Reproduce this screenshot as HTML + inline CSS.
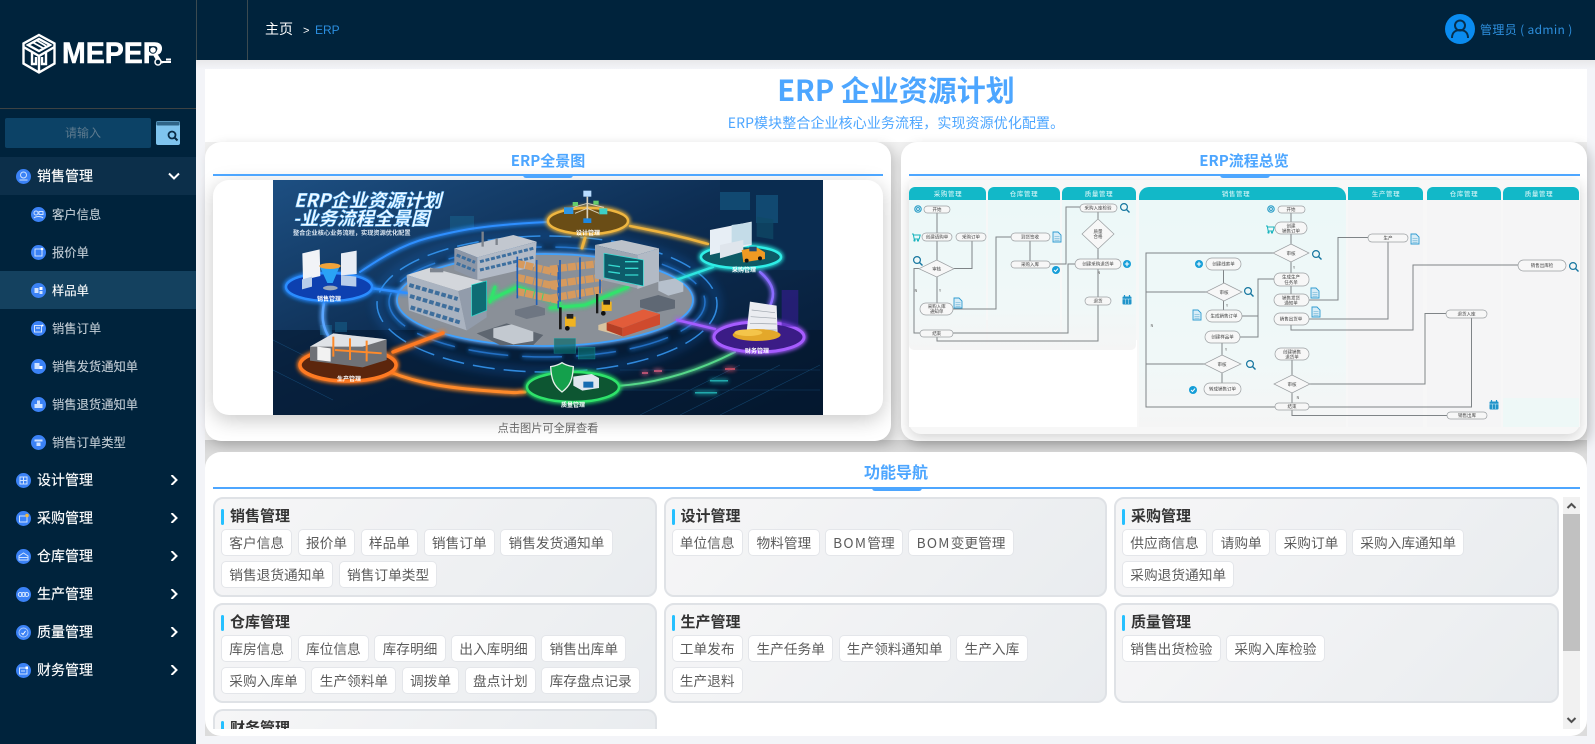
<!DOCTYPE html>
<html lang="zh-CN"><head><meta charset="utf-8"><title>ERP</title>
<style>
*{box-sizing:border-box;margin:0;padding:0}
html,body{width:1595px;height:744px;overflow:hidden;background:#f3f4f8;font-family:"Liberation Sans","Noto Sans CJK SC",sans-serif}
.abs{position:absolute}
#side{position:absolute;left:0;top:0;width:196px;height:744px;background:#00233c}
#head{position:absolute;left:196px;top:0;width:1399px;height:60px;background:#00233c}
.m{position:absolute;left:0;width:196px;height:38px;line-height:38px;font-size:14px;color:#fff;padding-left:37px;font-family:"Noto Sans CJK SC",sans-serif;-webkit-text-stroke:.15px #fff}
.s{padding-left:52px;font-size:12.3px;color:#c3ced6;-webkit-text-stroke:.1px #c3ced6}
.m>svg.i{position:absolute;left:16px;top:11.5px;width:15px;height:15px}
.s>svg.i{left:31px}
.m>svg.c{position:absolute;left:168px;top:14px;width:12px;height:10px}
.cjk{font-family:"Noto Sans CJK SC",sans-serif}
.card{position:absolute;border-radius:16px;box-shadow:4px 4px 12px rgba(0,0,0,.2);background:#fff}
.line{position:absolute;height:2px;background:#4da6ff}
.bar{position:absolute;width:50px;height:3px;background:#4da6ff;border-radius:0 0 3px 3px}
.ttl{position:absolute;font:bold 15px/20px "Noto Sans CJK SC",sans-serif;color:#4da6ff;text-align:center}
.g{position:relative;height:100px;border:2px solid #dfe2e6;border-radius:10px;background:linear-gradient(135deg,#f6f6f7,#e9ecef)}
.g h4{position:absolute;left:15px;top:6px;font:bold 15px/22px "Noto Sans CJK SC",sans-serif;color:#333}
.g h4:before{content:"";position:absolute;left:-9px;top:4px;width:3px;height:16px;background:#25c0ff;border-radius:2px}
.tags{position:absolute;left:6px;right:4px;top:30px;display:flex;flex-wrap:wrap;column-gap:5.3px;row-gap:5px}
.tags span{display:block;height:27px;line-height:25px;padding:0 7.3px;font-size:13.7px;color:#5c5c5c;background:#fff;border:1px solid #e4e6ea;border-radius:5px;font-family:"Noto Sans CJK SC",sans-serif;white-space:nowrap}
.tags i{font-style:normal;letter-spacing:1.3px}
svg text{font-family:"Noto Sans CJK SC",sans-serif}
</style></head><body>

<div id="head"></div>
<div class="abs" style="left:196px;top:0;width:1px;height:60px;background:#3b4a50"></div>
<div class="abs" style="left:247px;top:0;width:1px;height:60px;background:#3b4a50"></div>
<div class="abs cjk" style="left:265px;top:19px;font-size:14px;line-height:21px;color:#fff">主页</div>
<div class="abs" style="left:303px;top:21px;font-size:11px;line-height:20px;color:#fff">&gt;</div>
<div class="abs" style="left:315px;top:20px;font-size:12px;line-height:20px;color:#2b8fe0">ERP</div>
<svg class="abs" style="left:1445px;top:14px" width="30" height="30" viewBox="0 0 30 30"><circle cx="15" cy="15" r="15" fill="#0a8cf0"/><circle cx="15" cy="11.5" r="5" fill="none" stroke="#06304f" stroke-width="2"/><path d="M7 24c0-6 4-8 8-8s8 2 8 8" fill="none" stroke="#06304f" stroke-width="2"/></svg>
<div class="abs cjk" style="left:1480px;top:21px;font-size:12px;line-height:18px;color:#2d8fdd;letter-spacing:.35px;white-space:nowrap">管理员 ( admin )</div>

<div id="side">
<svg class="abs" style="left:20px;top:33px" width="38" height="42" viewBox="0 0 38 42" fill="none" stroke="#fff" stroke-width="2.4"><path d="M19 2l15.500 8.500v20L19 39.500 3.500 30.500v-20z"/><path d="M8 12l11-6 11 6-11 6z"/><path d="M3.500 14L19 23l15.500-9M12 19v12h4v-7M19 23v16M26 19v12h-4v-7"/><path d="M12 9l11 6M16 7l10 6" stroke-width="1.800"/></svg>
<div class="abs" style="left:62px;top:37px;font:bold 30px/34px 'Liberation Sans',sans-serif;color:#fff;-webkit-text-stroke:.5px #fff;transform-origin:left;transform:scaleX(.95)">MEPER</div>
<svg class="abs" style="left:146px;top:45px" width="26" height="24" viewBox="0 0 26 24" fill="none"><circle cx="7" cy="5" r="3.300" fill="#fff" stroke="#00233c"/><circle cx="12" cy="17" r="3" fill="#00233c" stroke="#fff" stroke-width="1.500"/><path d="M15 17h10M20 14.500h5" stroke="#fff" stroke-width="2"/></svg>
<div class="abs" style="left:0;top:108px;width:196px;height:1px;background:#3d4243"></div>
<div class="abs cjk" style="left:5px;top:118px;width:146px;height:30px;padding-left:10px;border-radius:2px;background:#0c4266;color:#5d7a8e;font-size:12px;line-height:30px;text-align:center">请输入</div>
<svg class="abs" style="left:156px;top:121px" width="24" height="24" viewBox="0 0 24 24"><rect width="24" height="24" rx="2" fill="#7fc4ee"/><rect x=".5" y=".5" width="23" height="4" rx="1" fill="#2f6487"/><circle cx="16" cy="14" r="3.500" fill="none" stroke="#0a2c46" stroke-width="1.800"/><path d="M18.500 16.500l3 3" stroke="#0a2c46" stroke-width="2"/></svg>

<div class="m" style="top:157px;background:#0c2f4a"><svg class="i" viewBox="0 0 15 15"><circle cx="7.500" cy="7.500" r="7.500" fill="#3b82f6"/><circle cx="7.500" cy="6" r="3" fill="none" stroke="#cfe2ff"/><path d="M3.500 11h8" stroke="#cfe2ff"/></svg>销售管理<svg class="c" viewBox="0 0 12 10"><path d="M1 2.500l5 5 5-5" fill="none" stroke="#fff" stroke-width="2"/></svg></div>
<div class="m s" style="top:195px"><svg class="i" viewBox="0 0 15 15"><circle cx="7.500" cy="7.500" r="7.500" fill="#3b82f6"/><circle cx="5" cy="6" r="2" fill="none" stroke="#cfe2ff"/><rect x="8" y="4.500" width="4" height="3" fill="none" stroke="#cfe2ff"/><path d="M3 11c2-2 7-2 9 0" fill="none" stroke="#cfe2ff"/></svg>客户信息</div>
<div class="m s" style="top:233px"><svg class="i" viewBox="0 0 15 15"><circle cx="7.500" cy="7.500" r="7.500" fill="#3b82f6"/><rect x="4" y="4" width="7" height="7" fill="none" stroke="#cfe2ff"/><circle cx="11" cy="4" r="1.300" fill="#fff"/></svg>报价单</div>
<div class="m s" style="top:271px;background:#14415f;color:#fff;-webkit-text-stroke:.1px #fff"><svg class="i" viewBox="0 0 15 15"><circle cx="7.500" cy="7.500" r="7.500" fill="#3b82f6"/><rect x="3.500" y="5" width="4" height="5" fill="#cfe2ff"/><rect x="8.500" y="4" width="3" height="3" fill="#fff"/><rect x="8.500" y="8" width="3" height="3" fill="#cfe2ff"/></svg>样品单</div>
<div class="m s" style="top:309px"><svg class="i" viewBox="0 0 15 15"><circle cx="7.500" cy="7.500" r="7.500" fill="#3b82f6"/><rect x="3.500" y="4.500" width="7" height="6.500" fill="none" stroke="#cfe2ff"/><path d="M5 7h4" stroke="#fff"/><circle cx="11.500" cy="4.500" r="1" fill="#fff"/></svg>销售订单</div>
<div class="m s" style="top:347px"><svg class="i" viewBox="0 0 15 15"><circle cx="7.500" cy="7.500" r="7.500" fill="#3b82f6"/><rect x="3.500" y="4" width="5" height="6" fill="#cfe2ff"/><path d="M8.500 7h3v3h-3z" fill="#fff"/></svg>销售发货通知单</div>
<div class="m s" style="top:385px"><svg class="i" viewBox="0 0 15 15"><circle cx="7.500" cy="7.500" r="7.500" fill="#3b82f6"/><rect x="6" y="3.500" width="3" height="4" fill="#cfe2ff"/><rect x="3.500" y="7" width="8" height="4" fill="#cfe2ff"/></svg>销售退货通知单</div>
<div class="m s" style="top:423px"><svg class="i" viewBox="0 0 15 15"><circle cx="7.500" cy="7.500" r="7.500" fill="#3b82f6"/><path d="M3.500 4.500h8v2h-8zM5.500 7.500h4V11h-4z" fill="#cfe2ff"/></svg>销售订单类型</div>
<div class="m" style="top:461px"><svg class="i" viewBox="0 0 15 15"><circle cx="7.500" cy="7.500" r="7.500" fill="#3b82f6"/><rect x="4" y="4" width="7" height="7" fill="none" stroke="#cfe2ff"/><path d="M7.500 4v7M4 7.500h7" stroke="#cfe2ff"/></svg>设计管理<svg class="c" viewBox="0 0 12 10"><path d="M3.500 0l5 5-5 5" fill="none" stroke="#fff" stroke-width="2"/></svg></div>
<div class="m" style="top:499px"><svg class="i" viewBox="0 0 15 15"><circle cx="7.500" cy="7.500" r="7.500" fill="#3b82f6"/><rect x="3.500" y="5" width="7.500" height="6" fill="none" stroke="#cfe2ff"/><circle cx="11" cy="4.500" r="1.800" fill="#f5b93a"/></svg>采购管理<svg class="c" viewBox="0 0 12 10"><path d="M3.500 0l5 5-5 5" fill="none" stroke="#fff" stroke-width="2"/></svg></div>
<div class="m" style="top:537px"><svg class="i" viewBox="0 0 15 15"><circle cx="7.500" cy="7.500" r="7.500" fill="#3b82f6"/><path d="M3 7l4.500-3L12 7v4H3z" fill="none" stroke="#cfe2ff"/><path d="M3 8.500h9" stroke="#cfe2ff"/></svg>仓库管理<svg class="c" viewBox="0 0 12 10"><path d="M3.500 0l5 5-5 5" fill="none" stroke="#fff" stroke-width="2"/></svg></div>
<div class="m" style="top:575px"><svg class="i" viewBox="0 0 15 15"><circle cx="7.500" cy="7.500" r="7.500" fill="#3b82f6"/><circle cx="4.300" cy="7.500" r="2" fill="none" stroke="#dbe9ff"/><circle cx="7.500" cy="7.500" r="2" fill="none" stroke="#dbe9ff"/><circle cx="10.700" cy="7.500" r="2" fill="none" stroke="#dbe9ff"/></svg>生产管理<svg class="c" viewBox="0 0 12 10"><path d="M3.500 0l5 5-5 5" fill="none" stroke="#fff" stroke-width="2"/></svg></div>
<div class="m" style="top:613px"><svg class="i" viewBox="0 0 15 15"><circle cx="7.500" cy="7.500" r="7.500" fill="#3b82f6"/><circle cx="7.500" cy="7.500" r="4.500" fill="none" stroke="#a9c8fb"/><path d="M5.500 8l1.500 1.500 2.500-3.500" fill="none" stroke="#fff"/></svg>质量管理<svg class="c" viewBox="0 0 12 10"><path d="M3.500 0l5 5-5 5" fill="none" stroke="#fff" stroke-width="2"/></svg></div>
<div class="m" style="top:651px"><svg class="i" viewBox="0 0 15 15"><circle cx="7.500" cy="7.500" r="7.500" fill="#3b82f6"/><rect x="3.500" y="5" width="7.500" height="6" fill="none" stroke="#cfe2ff"/><path d="M5 8h4" stroke="#cfe2ff"/><rect x="9.500" y="3.500" width="2.500" height="2.500" fill="#fff"/></svg>财务管理<svg class="c" viewBox="0 0 12 10"><path d="M3.500 0l5 5-5 5" fill="none" stroke="#fff" stroke-width="2"/></svg></div>
</div>

<!-- main -->
<div class="abs" style="left:196px;top:60px;width:1399px;height:9px;background:linear-gradient(180deg,#e8e8ea,#f3f4f8)"></div>
<div class="abs" style="left:205px;top:69px;width:1382px;height:373px;background:#fff"></div>
<div class="abs" style="left:205px;top:142px;width:1382px;height:298px;background:#f0f0f0"></div>
<div class="abs" style="left:205px;top:440px;width:1382px;height:296px;background:linear-gradient(180deg,#cdcdcd,#dcdcdc 5%,#dcdcdc)"></div>
<div class="abs" style="left:205px;top:69px;width:1382px;height:73px;background:#fff"></div>
<div class="abs cjk" style="left:205px;top:69px;width:1382px;text-align:center;font-size:29px;font-weight:bold;line-height:40px;color:#4da6ff">ERP 企业资源计划</div>
<div class="abs cjk" style="left:205px;top:112px;width:1382px;text-align:center;font-size:14px;line-height:22px;letter-spacing:.1px;color:#4da6ff">ERP模块整合企业核心业务流程，实现资源优化配置。</div>

<!-- left card -->
<div class="card" style="left:205px;top:142px;width:686px;height:299px"></div>
<div class="ttl" style="left:205px;top:151px;width:686px">ERP全景图</div>
<div class="abs" style="left:213px;top:180px;width:670px;height:235px;background:#fff;border-radius:16px;box-shadow:0 5px 20px rgba(0,0,0,.22)"></div>
<div class="line" style="left:213px;top:174px;width:670px"></div>
<div class="bar" style="left:523px;top:175px"></div>
<div class="abs cjk" style="left:205px;top:419px;width:686px;text-align:center;font-size:11.2px;line-height:18px;color:#666">点击图片可全屏查看</div>

<svg class="abs" style="left:273px;top:180px" width="550" height="235" viewBox="273 180 550 235">
<defs>
<linearGradient id="bg" x1="0" y1="0" x2="1" y2="1"><stop offset="0" stop-color="#1d4f82"/><stop offset=".45" stop-color="#0d2d52"/><stop offset="1" stop-color="#051a33"/></linearGradient>
<filter id="gl" x="-30%" y="-60%" width="160%" height="220%"><feGaussianBlur stdDeviation="2.500" result="b"/><feMerge><feMergeNode in="b"/><feMergeNode in="b"/><feMergeNode in="SourceGraphic"/></feMerge></filter>
<filter id="bl" x="-30%" y="-60%" width="160%" height="220%"><feGaussianBlur stdDeviation="5"/></filter>
</defs>
<rect x="273" y="180" width="550" height="235" fill="url(#bg)"/>
<rect x="273" y="330" width="550" height="85" fill="#04162b" opacity=".55"/>
<rect x="720" y="180" width="103" height="90" fill="#0a2c50"/>
<!-- background hologram / grid detail -->
<g stroke="#1b5c8e" stroke-width=".6" opacity=".6" fill="none"><path d="M640 415l100-50M680 415l100-50M720 415l100-50M273 340l60 30M273 370l60 30M620 370h200M620 390h200"/></g>
<g fill="#17628c" opacity=".55"><rect x="450" y="216" width="24" height="14"/><rect x="320" y="325" width="12" height="10"/><rect x="335" y="322" width="12" height="10"/><rect x="720" y="192" width="30" height="18"/><rect x="756" y="195" width="22" height="28"/></g>
<g fill="#ff6b8b" opacity=".7" filter="url(#gl)"><rect x="642" y="372" width="6" height="2"/><rect x="654" y="370" width="8" height="2"/><rect x="725" y="368" width="10" height="2" fill="#ff5a70"/></g>
<g fill="#2fe6e0" opacity=".7" filter="url(#gl)"><rect x="710" y="380" width="18" height="1.500"/><rect x="695" y="392" width="22" height="1.500"/></g>
<!-- platform glow arcs -->
<ellipse cx="547" cy="304" rx="170" ry="68" fill="none" stroke="#1e88ff" stroke-width="6" opacity=".3" filter="url(#bl)"/>
<ellipse cx="547" cy="304" rx="170" ry="68" fill="none" stroke="#39a0ff" stroke-width="1.500" stroke-dasharray="22 9" opacity=".8"/>
<ellipse cx="547" cy="302" rx="158" ry="55" fill="none" stroke="#2e93ff" stroke-width="1.500" stroke-dasharray="40 14" filter="url(#gl)" opacity=".7"/>
<ellipse cx="545" cy="300" rx="148" ry="46" fill="#8a9098" stroke="#3fa2ff" stroke-width="1.800" filter="url(#gl)"/>
<!-- pipelines -->
<g fill="none" stroke-linecap="round" filter="url(#gl)">
<path d="M360 272C375 262 400 245 428 238S480 225 548 222" stroke="#2f8fff" stroke-width="2"/>
<path d="M325 296C322 315 320 325 332 342" stroke="#5aa6ff" stroke-width="2.500"/>
<path d="M370 288L407 293" stroke="#2f8fff" stroke-width="2.500"/>
<path d="M393 352L443 333" stroke="#ff7a22" stroke-width="3.500"/>
<path d="M390 372C420 384 450 388 490 391S510 392 525 392" stroke="#ff8a2a" stroke-width="3"/>
<path d="M495 287L490 302M490 300L517 287L560 303" stroke="#32e26c" stroke-width="3"/>
<path d="M550 308L585 305L628 287" stroke="#32e26c" stroke-width="3"/>
<path d="M630 226C660 232 680 236 708 244" stroke="#eeb33d" stroke-width="2.500"/>
<path d="M585 238L582 248" stroke="#eeb33d" stroke-width="3"/>
<path d="M676 280L713 267" stroke="#2fe6e0" stroke-width="2.500"/>
<path d="M760 272C775 285 775 295 770 306" stroke="#8a6cff" stroke-width="2.500"/>
<path d="M677 320L715 329" stroke="#a45cff" stroke-width="2.500"/>
<path d="M735 352C700 370 660 383 617 386" stroke="#57d88a" stroke-width="2"/>
</g>
<!-- rings -->
<g filter="url(#gl)">
<ellipse cx="329" cy="287" rx="43" ry="14" fill="#0b3fb0" stroke="#2b8dff" stroke-width="2.500"/>
<ellipse cx="348" cy="365" rx="48" ry="16" fill="#5c260f" stroke="#ff7a22" stroke-width="3.500"/>
<ellipse cx="573" cy="387" rx="46" ry="15" fill="#0a5632" stroke="#2de36a" stroke-width="2.500"/>
<ellipse cx="588" cy="221" rx="40" ry="13" fill="#6b4d13" stroke="#efb63f" stroke-width="2.500"/>
<ellipse cx="741" cy="257" rx="40" ry="11" fill="#0b5a66" stroke="#2feee6" stroke-width="2.500"/>
<ellipse cx="759" cy="337" rx="45" ry="15" fill="#3a1a86" stroke="#a65cff" stroke-width="3"/>
</g>
<!-- sales objects -->
<g transform="translate(260,170) scale(.3333)">
<path d="M127 250l52-12 2 80-52 12z" fill="#f1f3f7"/><path d="M243 250l47-8v70l-47 4z" fill="#e8edf5"/>
<path d="M178 287h62l-22 52h-16z" fill="#2aa3f5"/><ellipse cx="210" cy="288" rx="32" ry="9" fill="#f0a33a"/><ellipse cx="211" cy="354" rx="22" ry="7" fill="#9aa9bb"/>
<path d="M126 328l30-8v30l-30 8zM243 315l46 5v30l-46-4z" fill="#b7cdea"/>
<!-- factory -->
<path d="M150 530l70-40 160 18v62l-72 22-158-20z" fill="#6f7176"/><path d="M150 530l70-40 160 18-72 22z" fill="#dfe2e6"/>
<path d="M220 500v60M270 505v65M320 512v62M225 540l140 10" stroke="#ff8a2a" stroke-width="6"/>
<path d="M172 530v40l40 5v-40z" fill="#f2f2f2"/>
<!-- back building -->
<path d="M583 235L760 195l70 20-178 47z" fill="#c2c7cf"/><path d="M583 235l69 27v68l-69-30z" fill="#8c96a6"/><path d="M652 262l178-47-5 75-173 40z" fill="#b2bac6"/>
<g stroke="#3d6f9f" stroke-width="9" fill="none" stroke-dasharray="12 5"><path d="M590 255l55 22M590 280l55 22M660 275l160-40M660 300l160-38"/></g>
<path d="M668 185v45M710 205v20" stroke="#7d838c" stroke-width="7"/>
<!-- front building -->
<path d="M440 315l71-22 169 44-85 26z" fill="#d3d6db"/><path d="M440 315l155 48 25 118-173-60z" fill="#aab3c0"/><path d="M595 363l85-26v105l-60 40z" fill="#929cab"/>
<g stroke="#3e6e9c" stroke-width="12" fill="none" stroke-dasharray="14 6"><path d="M448 345l145 42M450 378l150 44M452 412l150 46"/></g>
<path d="M635 345l45-12v88l-45 18z" fill="#0e6c74" stroke="#2ee0d2" stroke-width="2"/>
<path d="M510 295h40v12h-40z" fill="#7e8590"/>
<!-- yard -->
<path d="M650 490l90-30 110 35-30 30-100 0z" fill="#5e6670"/><path d="M700 475l55-12 65 22v28l-60 10-60-20z" fill="#c3c9d0"/>
<path d="M765 420l60-15 30 10v20l-55 12-35-12z" fill="#6e7682"/>
<!-- rack -->
<g fill="none" stroke="#d69a5e" stroke-width="22" stroke-dasharray="24 3"><path d="M770 280l130 30M770 322l130 30M770 364l130 28"/></g>
<path d="M772 260v125M830 270v135M895 285v130" stroke="#1f5fb8" stroke-width="5"/>
</g>
<g transform="translate(550,170) scale(.3333)">
<!-- tree -->
<path d="M112 80v75" stroke="#d8cfb9" stroke-width="5"/>
<path d="M112 100L60 115M112 100l50 12M112 115L75 130M112 115l35 15" stroke="#d8cfb9" stroke-width="3"/>
<rect x="100" y="62" width="24" height="18" fill="#b9dcff"/><rect x="42" y="112" width="28" height="20" fill="#2d97e8"/><rect x="148" y="115" width="24" height="18" fill="#3ed0c6"/><rect x="68" y="96" width="16" height="12" fill="#65cc6c"/><rect x="130" y="92" width="16" height="12" fill="#65cc6c"/>
<rect x="100" y="145" width="24" height="14" fill="#1d86e0"/>
<!-- rack -->
<g fill="none" stroke="#d69a5e" stroke-width="22" stroke-dasharray="24 3"><path d="M0 298l155-18M0 344l155-22M0 385l155-26"/></g>
<path d="M30 270v125M90 262v125M150 255v115" stroke="#1f5fb8" stroke-width="5"/>
<!-- right building -->
<path d="M135 225l80-15 112 25-65 20z" fill="#bcc2ca"/><path d="M135 225l127 30v100l-127-30z" fill="#9ea7b3"/><path d="M262 255l65-20v100l-65 22z" fill="#b2bac5"/>
<path d="M162 250l118 20v78l-118-25z" fill="#0d5c6a" stroke="#2de0d4" stroke-width="2"/>
<path d="M225 275h40M225 295h40M225 315h40M175 285l35 5M175 305l35 5" stroke="#35d9d0" stroke-width="4"/>
<path d="M325 335l50-10 25 15v25l-45 12-30-15z" fill="#b6c0cc"/>
<path d="M270 390l55-15 50 15v25l-55 12-50-15z" fill="#5f6874"/>
<!-- containers -->
<path d="M145 465l25-8 50 18v25l-75-20z" fill="#d8c4a0"/>
<path d="M170 458l110-40 50 14-112 42z" fill="#e25c3a"/><path d="M170 458l48 16v25l-48-18z" fill="#b43f25"/><path d="M218 474l112-42v32l-112 36z" fill="#cf4a2d"/>
<!-- forklifts -->
<g><rect x="155" y="395" width="30" height="28" fill="#f0b320"/><rect x="138" y="372" width="7" height="58" fill="#1a1a1a"/><rect x="160" y="390" width="20" height="14" fill="#222"/><circle cx="160" cy="430" r="7" fill="#111"/></g>
<g><rect x="45" y="440" width="32" height="30" fill="#f0b320"/><rect x="27" y="412" width="8" height="66" fill="#1a1a1a"/><rect x="50" y="432" width="20" height="14" fill="#222"/><circle cx="52" cy="475" r="7" fill="#111"/></g>
<!-- trucks & docs -->
<path d="M480 180l125-25v70l-125 30z" fill="#e7eef5"/><path d="M545 165l60-8v65l-60 8z" fill="#c4dce8"/>
<path d="M510 225l70-15v35l-70 20z" fill="#dfe5ec"/>
<path d="M575 240l45-8 25 15v20l-65 10z" fill="#f09a23"/><rect x="598" y="230" width="22" height="14" fill="#234a70"/><circle cx="590" cy="272" r="6" fill="#111"/><circle cx="630" cy="265" r="6" fill="#111"/>
<path d="M620 140l50 8v60l-50-8z" fill="#0e4a66" opacity=".7"/>
<!-- finance -->
<path d="M600 395l80 12 3 85-95 10z" fill="#ebedf1"/><g stroke="#9da4ad" stroke-width="2"><path d="M605 420l70 8M602 440l76 5M600 460l80 2M598 480l82 0"/></g>
<ellipse cx="620" cy="495" rx="72" ry="18" fill="#e4a82a"/><ellipse cx="595" cy="488" rx="42" ry="10" fill="#f4c54a"/>
<path d="M695 360h50v110h-50z" fill="#3a1c9c" opacity=".55"/>
<!-- shield -->
<path d="M36 578c12 8 22 10 34 12-2 40-10 58-34 76-24-18-32-36-34-76 12-2 22-4 34-12z" fill="#14a04c" stroke="#e6f0ea" stroke-width="4"/>
<path d="M70 620l55-8 22 12v30l-50 8-27-15z" fill="#dfe6ee"/><rect x="100" y="635" width="30" height="18" fill="#176bb0"/>
<g fill="#0a6b6d" stroke="#19c3bc" opacity=".7"><rect x="12" y="505" width="65" height="45"/><rect x="85" y="532" width="50" height="35"/></g>
</g>
<g fill="#fff">
<text x="294" y="207" font-size="18.500" font-weight="bold" font-style="italic" fill="#f2faff" stroke="#6cc0ff" stroke-width=".5">ERP企业资源计划</text>
<text x="293" y="225" font-size="18.500" font-weight="bold" font-style="italic" fill="#f2faff" stroke="#6cc0ff" stroke-width=".5">-业务流程全景图</text>
<text x="293" y="235" font-size="6.200" font-weight="bold" fill="#dce7f2">整合企业核心业务流程，实现资源优化配置</text>
<g font-size="6" text-anchor="middle" font-weight="bold">
<text x="329" y="301">销售管理</text><text x="349" y="381">生产管理</text><text x="573" y="407">质量管理</text><text x="588" y="235">设计管理</text><text x="744" y="272">采购管理</text><text x="757" y="353">财务管理</text>
</g></g>
</svg>

<!-- right card -->
<div class="card" style="left:901px;top:142px;width:686px;height:299px"></div>
<div class="ttl" style="left:901px;top:151px;width:686px">ERP流程总览</div>
<div class="abs" style="left:909px;top:180px;width:671px;height:254px;background:#f7f7f7;border-radius:6px 6px 12px 12px;box-shadow:0 4px 14px rgba(0,0,0,.18)"></div>
<div class="line" style="left:909px;top:174px;width:671px"></div>
<div class="bar" style="left:1220px;top:175px"></div>

<svg class="abs" style="left:909px;top:180px" width="671" height="247" viewBox="909 180 671 247">
<defs>
<linearGradient id="lane" x1="0" y1="0" x2="0" y2="1"><stop offset="0" stop-color="#ecf8f8"/><stop offset=".7" stop-color="#f0f8f8"/><stop offset="1" stop-color="#f5f5f5"/></linearGradient>
<g id="mag" fill="none"><circle cx="-1" cy="-1" r="3.400" stroke="#14759f" stroke-width="1.200"/><path d="M1.500 1.500l3 3" stroke="#14759f" stroke-width="1.400"/></g>
<g id="doc"><path d="M-4-5h5l3 3v7h-8z" fill="#d8edf7" stroke="#2f9bd0" stroke-width=".9"/><path d="M-2.500-.5h5M-2.500 1.500h5M-2.500 3.200h5" stroke="#5aa9cf" stroke-width=".6"/></g>
<g id="plus"><circle r="4" fill="#159ed8"/><path d="M-2.200 0h4.400M0-2.200v4.400" stroke="#fff" stroke-width="1.100"/></g>
<g id="chk"><circle r="4" fill="#159ed8"/><path d="M-2 0l1.500 1.500L2-1.400" stroke="#fff" stroke-width="1" fill="none"/></g>
<g id="cal"><rect x="-4.500" y="-3.500" width="9" height="8" rx="1" fill="#1f93c9"/><path d="M-2.500-5v2M2.500-5v2" stroke="#1f93c9" stroke-width="1.200"/><path d="M-4.500-1h9M-1.500-1v5M1.500-1v5" stroke="#d8f0fa" stroke-width=".5"/></g>
<g id="cart" fill="none" stroke="#17b3bd" stroke-width="1"><path d="M-4-3h1.200l1 5h5l1-4h-6.500"/><circle cx="-1.500" cy="3.500" r=".6"/><circle cx="2" cy="3.500" r=".6"/></g>
<g id="gear"><circle r="3.800" fill="#2e9fc7"/><circle r="2.300" fill="none" stroke="#dff3fa" stroke-width=".7"/><circle r="1" fill="#dff3fa"/></g>
</defs>
<rect x="909" y="180" width="671" height="247" fill="#f7f7f7"/>
<rect x="909" y="340" width="228" height="87" fill="#fff"/>
<rect x="1576" y="180" width="4" height="247" fill="#f7f7f7"/>
<!-- lane bodies -->
<g fill="url(#lane)">
<path d="M909 200h77v150h-72a5 5 0 0 1-5-5z"/><path d="M988 200h72v150h-72z"/><path d="M1062 200h74v145a5 5 0 0 1-5 5h-69z"/>
<path d="M986 320h2v30h-2zM1060 320h2v30h-2z" fill="#f5f5f5"/>
<path d="M1139 200h207v227h-207z"/>
</g>
<rect x="1348" y="200" width="75" height="227" fill="#f5f5f6"/><rect x="1427" y="200" width="74" height="227" fill="#f5f5f6"/><rect x="1503" y="200" width="76" height="227" fill="#f5f5f6"/>
<rect x="1503" y="398" width="76" height="29" fill="#eef8f7"/>
<!-- lane headers -->
<g fill="#12b8c8">
<path d="M909 200v-7a6 6 0 0 1 6-6h65a6 6 0 0 1 6 6v7z"/><path d="M988 200v-7a6 6 0 0 1 6-6h60a6 6 0 0 1 6 6v7z"/><path d="M1062 200v-7a6 6 0 0 1 6-6h62a6 6 0 0 1 6 6v7z"/>
<path d="M1139 200v-3a10 10 0 0 1 10-10h187a10 10 0 0 1 10 10v3z"/><path d="M1348 200v-13h69a6 6 0 0 1 6 6v7z"/><path d="M1427 200v-7a6 6 0 0 1 6-6h62a6 6 0 0 1 6 6v7z"/><path d="M1503 200v-7a6 6 0 0 1 6-6h64a6 6 0 0 1 6 6v7z"/>
</g>
<g fill="#e8fbfc" font-size="6.500" text-anchor="middle" letter-spacing=".6">
<text x="948" y="196">采购管理</text><text x="1024" y="196">仓库管理</text><text x="1099" y="196">质量管理</text><text x="1236" y="196">销售管理</text><text x="1386" y="196">生产管理</text><text x="1464" y="196">仓库管理</text><text x="1539" y="196">质量管理</text>
</g>
<!-- lines -->
<g fill="none" stroke="#7f8487" stroke-width="1">
<path d="M937 213v20M937 241v19M937 277v26M954 268.500h18V241M919 268.500h-5V333h6M953 309h43V237h15M953 333h115V264h7M1030 241v20M1050 264h16V207h14M1098 212v7M1098 249v10M1098 269v28M1098 305v36H937v-4"/>
<path d="M1291 213v9M1291 234v10M1291 262v11M1291 286v8M1273 253h-127v154h129M1206 292h-60M1204 364h-58M1223.500 270v13M1223.500 301v9M1242 316h16v-37h16M1240 337h18v-21M1222 343v12M1222 373v10M1309 300h29v-62.500h30M1388 242v77h-79M1291 325v5h122v-65h105M1292 360v15M1292 393v10M1310 384h115v-70.500h21M1471.500 318v89H1309M1447 415.500h-155V410"/>
</g>
<!-- pills -->
<g fill="#f7f7f7" stroke="#9a9ea1" stroke-width=".7">
<rect x="924" y="206" width="26" height="7" rx="3.500"/><rect x="922" y="233" width="30" height="8" rx="4"/><rect x="956" y="233" width="30" height="8" rx="4"/><rect x="920" y="303" width="33" height="12" rx="6"/><rect x="920" y="330" width="33" height="7" rx="3.500"/>
<rect x="1011" y="233" width="39" height="8" rx="4"/><rect x="1011" y="261" width="39" height="7" rx="3.500"/>
<rect x="1080" y="204" width="37" height="8" rx="4"/><rect x="1075" y="259" width="46" height="10" rx="5"/><rect x="1085" y="297" width="26" height="8" rx="4"/>
<rect x="1278" y="206" width="27" height="7" rx="3.500"/><rect x="1275" y="222" width="32" height="12" rx="6"/><rect x="1274" y="273" width="35" height="13" rx="6"/><rect x="1274" y="294" width="35" height="12" rx="6"/><rect x="1274" y="313" width="35" height="12" rx="6"/><rect x="1275" y="348" width="34" height="12" rx="6"/><rect x="1275" y="403" width="34" height="7" rx="3.500"/>
<rect x="1206" y="258" width="35" height="12" rx="6"/><rect x="1206" y="310" width="36" height="12" rx="6"/><rect x="1205" y="331" width="35" height="12" rx="6"/><rect x="1204" y="383" width="37" height="12" rx="6"/>
<rect x="1368" y="234" width="40" height="8" rx="4"/><rect x="1518" y="260" width="48" height="11" rx="5.500"/><rect x="1446" y="310" width="41" height="8" rx="4"/><rect x="1447" y="412" width="40" height="7" rx="3.500"/>
<path d="M936.700 260l17.300 8.700-17.300 8.300-17.700-8.300z"/><path d="M1098 219l16 15-16 15-16-15z"/><path d="M1291 244l18 9-18 9-18-9z"/><path d="M1224 283l18 9-18 9-18-9z"/><path d="M1222 355l19 9-19 9-18-9z"/><path d="M1292 375l18 9-18 9-18-9z"/>
</g>
<!-- pill text -->
<g fill="#444" font-size="4.500" text-anchor="middle">
<text x="937" y="211">开始</text><text x="937" y="238.500">创建请购单</text><text x="971" y="238.500">采购订单</text><text x="936.700" y="308">采购入库</text><text x="936.700" y="313">通知单</text><text x="936.700" y="335">结束</text><text x="936.700" y="270.500">审核</text>
<text x="1030" y="238.500">到货签收</text><text x="1030" y="266">采购入库</text>
<text x="1098" y="209.500">采购入库检验</text><text x="1098" y="233">质量</text><text x="1098" y="238">合格</text><text x="1098" y="265.500">创建采购退货单</text><text x="1098" y="302.500">退货</text>
<text x="1291" y="211">开始</text><text x="1291" y="227.500">创建</text><text x="1291" y="232.500">销售订单</text><text x="1291" y="255">审核</text><text x="1291" y="278.500">生成生产</text><text x="1291" y="283.800">任务单</text><text x="1291" y="299.500">销售发货</text><text x="1291" y="304.500">通知单</text><text x="1291" y="320.500">销售出货单</text><text x="1292" y="353.500">创建销售</text><text x="1292" y="358.500">退货单</text><text x="1292" y="386">审核</text><text x="1292" y="408">结束</text>
<text x="1223.500" y="265.500">创建线索单</text><text x="1224" y="294">审核</text><text x="1224" y="317.500">生成销售订单</text><text x="1222.500" y="338.500">创建样品单</text><text x="1222" y="366">审核</text><text x="1222.500" y="390.500">转成销售订单</text>
<text x="1388" y="239.500">生产</text><text x="1542" y="267">销售出库检</text><text x="1466.500" y="315.500">退货入库</text><text x="1467" y="417">销售出库</text>
<g fill="#666" font-size="4"><text x="916" y="292">N</text><text x="940" y="292">Y</text><text x="1099" y="274">N</text><text x="1294" y="269">Y</text><text x="1227" y="307">Y</text><text x="1152" y="327">N</text><text x="1226" y="351">Y</text><text x="1298" y="399">N</text></g>
</g>
<!-- icons -->
<use href="#gear" x="918" y="209"/><use href="#cart" x="916" y="237"/><use href="#mag" x="918" y="261"/><use href="#doc" x="958" y="303"/><use href="#doc" x="1057" y="237"/><use href="#chk" x="1056" y="270"/><use href="#mag" x="1125" y="208"/><use href="#plus" x="1127" y="264"/><use href="#cal" x="1127" y="300"/>
<use href="#gear" x="1271" y="209"/><use href="#cart" x="1270" y="229"/><use href="#mag" x="1317" y="255"/><use href="#doc" x="1315" y="293"/><use href="#doc" x="1316" y="312"/><use href="#plus" x="1199" y="264"/><use href="#mag" x="1249" y="292"/><use href="#doc" x="1197" y="315"/><use href="#mag" x="1251" y="365"/><use href="#chk" x="1193" y="390"/>
<use href="#doc" x="1415" y="239"/><use href="#mag" x="1574" y="267"/><use href="#cal" x="1494" y="405"/>
</svg>

<!-- nav card -->
<div class="abs" style="left:205px;top:452px;width:1382px;height:284px;background:#fff;border-radius:16px"></div>
<div class="ttl" style="left:205px;top:461px;width:1382px;font-size:16px">功能导航</div>
<div class="line" style="left:213px;top:487px;width:1367px"></div>
<div class="bar" style="left:872px;top:488px"></div>

<div class="abs" style="left:213px;top:497px;width:1350px;height:232px;overflow:hidden">
<div style="display:grid;grid-template-columns:443.5px 443.5px 445px;column-gap:7px;row-gap:6px;width:1346px">
<div class="g"><h4>销售管理</h4><div class="tags"><span>客户信息</span><span>报价单</span><span>样品单</span><span>销售订单</span><span>销售发货通知单</span><span>销售退货通知单</span><span>销售订单类型</span></div></div>
<div class="g"><h4>设计管理</h4><div class="tags"><span>单位信息</span><span>物料管理</span><span><i>BOM</i>管理</span><span><i>BOM</i>变更管理</span></div></div>
<div class="g"><h4>采购管理</h4><div class="tags"><span>供应商信息</span><span>请购单</span><span>采购订单</span><span>采购入库通知单</span><span>采购退货通知单</span></div></div>
<div class="g"><h4>仓库管理</h4><div class="tags"><span>库房信息</span><span>库位信息</span><span>库存明细</span><span>出入库明细</span><span>销售出库单</span><span>采购入库单</span><span>生产领料单</span><span>调拨单</span><span>盘点计划</span><span>库存盘点记录</span></div></div>
<div class="g"><h4>生产管理</h4><div class="tags"><span>工单发布</span><span>生产任务单</span><span>生产领料通知单</span><span>生产入库</span><span>生产退料</span></div></div>
<div class="g"><h4>质量管理</h4><div class="tags"><span>销售出货检验</span><span>采购入库检验</span></div></div>
<div class="g" style="height:20px;border-bottom:0;border-radius:10px 10px 0 0;overflow:hidden"><h4>财务管理</h4></div>
</div></div>

<!-- scrollbar -->
<div class="abs" style="left:1563px;top:497px;width:17px;height:232px;background:#f1f1f1"></div>
<div class="abs" style="left:1563px;top:514px;width:17px;height:137px;background:#c1c1c1"></div>
<svg class="abs" style="left:1563px;top:497px" width="17" height="232" viewBox="0 0 17 232" fill="none" stroke="#505050" stroke-width="2"><path d="M4.500 11l4-4 4 4M4.500 221l4 4 4-4"/></svg>
</body></html>
